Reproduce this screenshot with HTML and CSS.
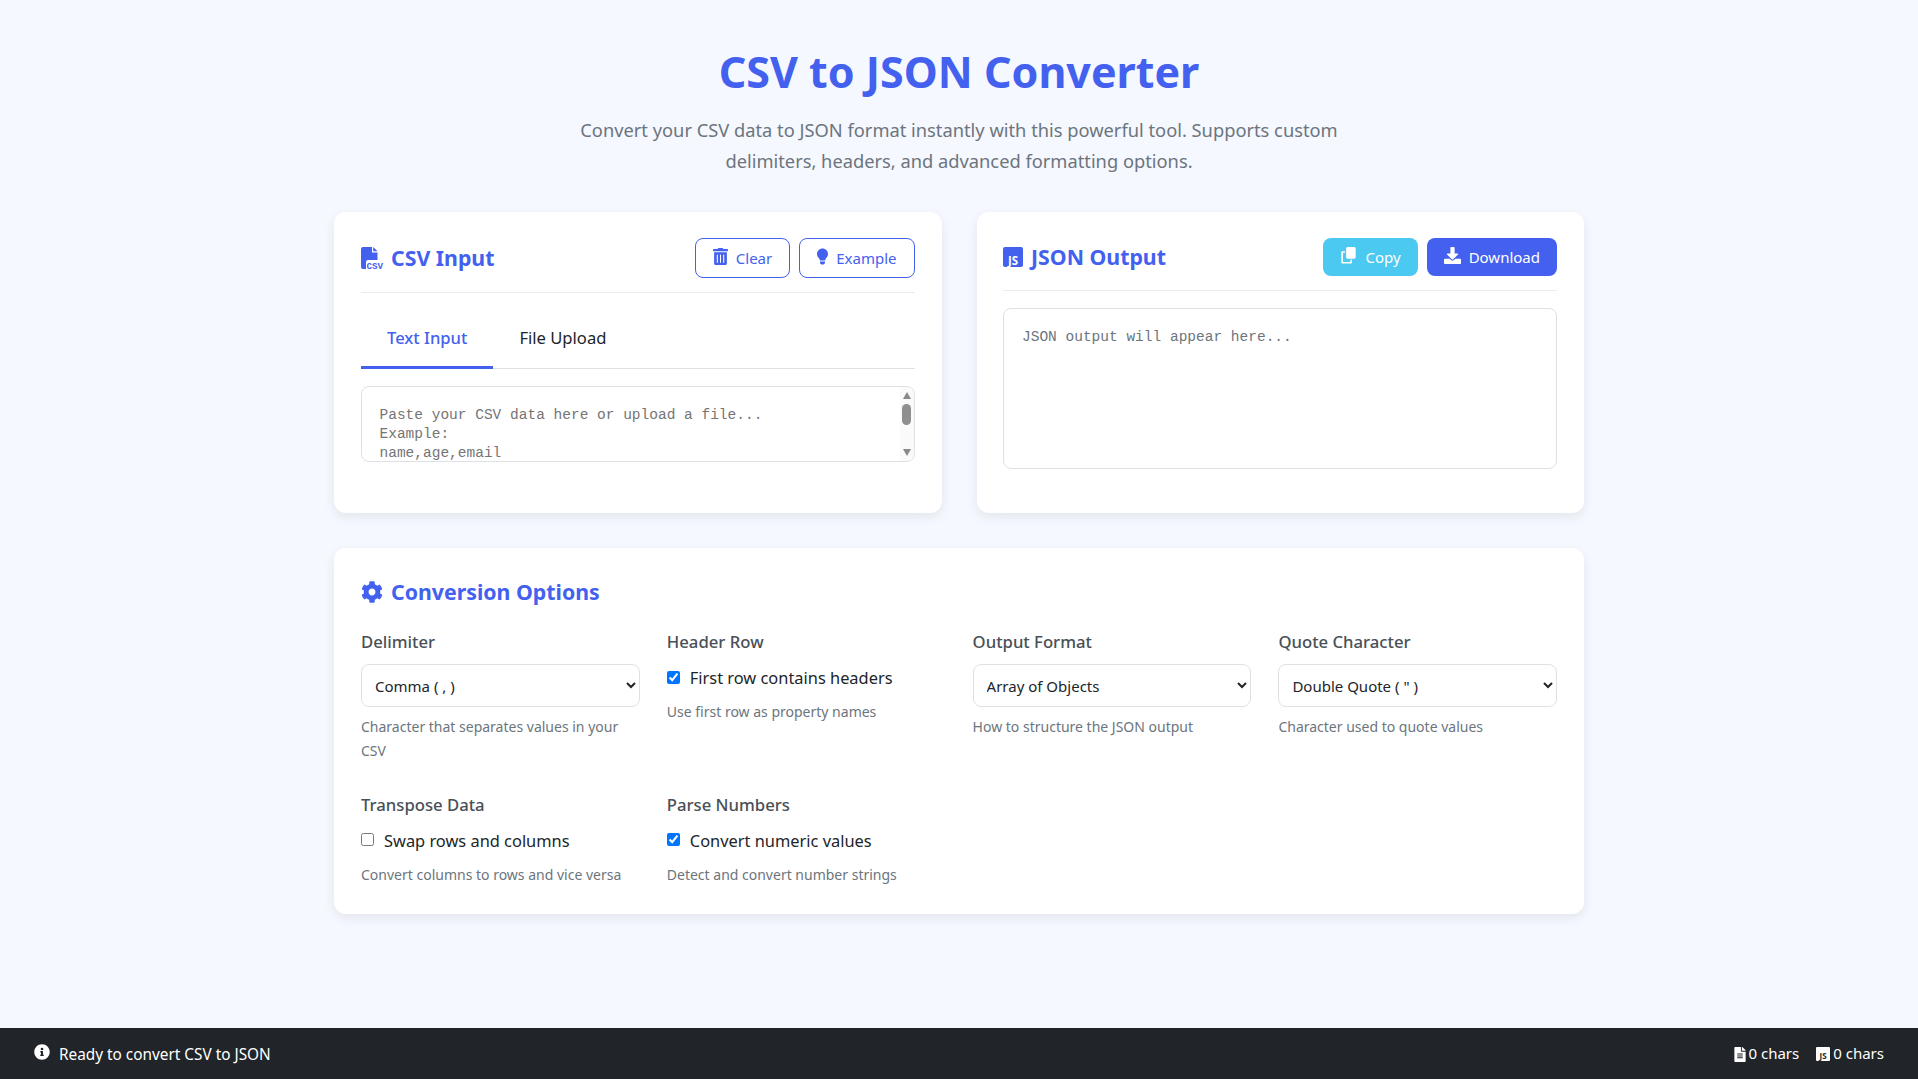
FILE: index.html
```html
<!DOCTYPE html>
<html lang="en">
<head>
<meta charset="utf-8">
<title>CSV to JSON Converter</title>
<link rel="stylesheet" href="styles.css">
</head>
<body>
<svg class="defs" width="0" height="0" aria-hidden="true">
  <defs>
    <symbol id="i-gear" viewBox="0 0 512 512"><path d="M487.4 315.7l-42.6-24.6c4.3-23.2 4.3-47 0-70.2l42.6-24.6c4.9-2.8 7.1-8.6 5.5-14-11.1-35.6-30-67.8-54.7-94.6-3.8-4.1-10-5.1-14.8-2.3L380.8 110c-17.9-15.4-38.5-27.3-60.8-35.1V25.8c0-5.6-3.9-10.5-9.4-11.7-36.7-8.2-74.3-7.8-109.2 0-5.5 1.2-9.4 6.1-9.4 11.7V75c-22.2 7.9-42.8 19.8-60.8 35.1L88.7 85.5c-4.9-2.8-11-1.9-14.8 2.3-24.7 26.7-43.6 58.9-54.7 94.6-1.7 5.4.6 11.2 5.5 14L67.3 221c-4.3 23.2-4.3 47 0 70.2l-42.6 24.6c-4.9 2.8-7.1 8.6-5.5 14 11.1 35.6 30 67.8 54.7 94.6 3.8 4.1 10 5.1 14.8 2.3l42.6-24.6c17.9 15.4 38.5 27.3 60.8 35.1v49.2c0 5.6 3.9 10.5 9.4 11.7 36.7 8.2 74.3 7.8 109.2 0 5.5-1.2 9.4-6.1 9.4-11.7v-49.2c22.2-7.9 42.8-19.8 60.8-35.1l42.6 24.6c4.9 2.8 11 1.9 14.8-2.3 24.7-26.7 43.6-58.9 54.7-94.6 1.5-5.5-.7-11.3-5.6-14.1zM256 336c-44.1 0-80-35.9-80-80s35.9-80 80-80 80 35.9 80 80-35.9 80-80 80z"/></symbol>
  </defs>
</svg>
<main class="page">
  <header class="hero">
    <h1 class="hero-title">CSV to JSON Converter</h1>
    <p class="hero-sub">Convert your CSV data to JSON format instantly with this powerful tool. Supports custom delimiters, headers, and advanced formatting options.</p>
  </header>

  <section class="panels">
    <article class="card">
      <div class="card-head">
        <h2 class="card-title">
          <svg class="icon-csv" viewBox="0 0 24 25"><path class="fill-cur" d="M2 0h9v5.500h5.500V13H7a2 2 0 0 0-2 2v7H2a2 2 0 0 1-2-2V2a2 2 0 0 1 2-2zM12.200 0l4.300 4.300H12.200z"/><text class="csv-mark" x="5.400" y="21.500">CSV</text></svg>
          CSV Input
        </h2>
        <div class="btn-row">
          <button class="btn btn-outline"><svg class="btn-icon" viewBox="0 0 448 512"><path fill="currentColor" d="M32 464a48 48 0 0 0 48 48h288a48 48 0 0 0 48-48V128H32zm272-256a16 16 0 0 1 32 0v224a16 16 0 0 1-32 0zm-96 0a16 16 0 0 1 32 0v224a16 16 0 0 1-32 0zm-96 0a16 16 0 0 1 32 0v224a16 16 0 0 1-32 0zM432 32H312l-9.400-18.700A24 24 0 0 0 281.100 0H166.800a23.700 23.700 0 0 0-21.400 13.300L136 32H16A16 16 0 0 0 0 48v32a16 16 0 0 0 16 16h416a16 16 0 0 0 16-16V48a16 16 0 0 0-16-16z"/></svg>Clear</button>
          <button class="btn btn-outline"><svg class="btn-icon btn-icon-bulb" viewBox="0 0 352 512"><path fill="currentColor" d="M96 454.300c0 6.300 1.900 12.500 5.400 17.700l17.100 25.700c5.200 7.900 16.900 14.300 26.400 14.300h61.700c9.500 0 21.200-6.400 26.400-14.300l17.100-25.700c3-4.500 5.400-12.100 5.400-17.700L256 416H96zM176 0C73.700 0 0 83 0 176c0 44.400 16.500 84.900 43.600 115.800 16.600 18.900 42.400 58.500 52.200 91.900l.2 .3h160l.2-.3c9.800-33.400 35.600-73 52.200-91.900C335.500 260.900 352 220.400 352 176 352 78.800 273.200 0 176 0z"/></svg>Example</button>
        </div>
      </div>
      <div class="tabs">
        <button class="tab tab-active">Text Input</button>
        <button class="tab">File Upload</button>
      </div>
      <div class="csv-wrap">
        <textarea class="csv-area" placeholder="Paste your CSV data here or upload a file...&#10;Example:&#10;name,age,email&#10;John,30,john@example.com&#10;Jane,25,jane@example.com&#10;Bob,41,bob@example.com"></textarea>
        <div class="scrollbar" aria-hidden="true">
          <span class="sb-up"></span>
          <span class="sb-thumb"></span>
          <span class="sb-down"></span>
        </div>
      </div>
    </article>

    <article class="card card-right">
      <div class="card-head card-head-tight">
        <h2 class="card-title">
          <svg class="icon-js" viewBox="0 0 20 20"><rect class="fill-cur" width="20" height="20" rx="2"/><text class="js-mark" x="5" y="17.500">JS</text></svg>
          JSON Output
        </h2>
        <div class="btn-row">
          <button class="btn btn-info"><svg class="btn-icon btn-icon-copy" viewBox="0 0 512 512"><path fill="currentColor" d="M208 0h192a48 48 0 0 1 48 48v256a48 48 0 0 1-48 48H208a48 48 0 0 1-48-48V48a48 48 0 0 1 48-48zM64 128h64v48H64v272h224v-64h48v80a32 32 0 0 1-32 32H48a32 32 0 0 1-32-32V160a32 32 0 0 1 32-32z" transform="translate(24 0)"/></svg>Copy</button>
          <button class="btn btn-primary"><svg class="btn-icon btn-icon-copy" viewBox="0 0 512 512"><path fill="currentColor" d="M216 0h80c13.300 0 24 10.700 24 24v168h87.700c17.800 0 26.700 21.500 14.100 34.100L269.700 378.300c-7.500 7.500-19.800 7.500-27.300 0L90.100 226.100c-12.600-12.600-3.700-34.100 14.100-34.100H192V24c0-13.300 10.700-24 24-24zm296 376v112c0 13.300-10.700 24-24 24H24c-13.300 0-24-10.700-24-24V376c0-13.300 10.700-24 24-24h146.700l49 49c20.100 20.100 52.500 20.100 72.600 0l49-49H488c13.300 0 24 10.700 24 24z"/></svg>Download</button>
        </div>
      </div>
      <div class="json-out">JSON output will appear here...</div>
    </article>
  </section>

  <section class="card options">
    <h2 class="card-title options-title"><svg class="icon-gear"><use href="#i-gear"/></svg>Conversion Options</h2>
    <div class="options-grid">
      <div class="opt">
        <label class="opt-label">Delimiter</label>
        <select class="opt-select"><option>Comma ( , )</option></select>
        <p class="opt-help">Character that separates values in your CSV</p>
      </div>
      <div class="opt">
        <span class="opt-label">Header Row</span>
        <label class="check"><input type="checkbox" checked>First row contains headers</label>
        <p class="opt-help">Use first row as property names</p>
      </div>
      <div class="opt">
        <label class="opt-label">Output Format</label>
        <select class="opt-select"><option>Array of Objects</option></select>
        <p class="opt-help">How to structure the JSON output</p>
      </div>
      <div class="opt">
        <label class="opt-label">Quote Character</label>
        <select class="opt-select"><option>Double Quote ( " )</option></select>
        <p class="opt-help">Character used to quote values</p>
      </div>
      <div class="opt">
        <span class="opt-label">Transpose Data</span>
        <label class="check"><input type="checkbox">Swap rows and columns</label>
        <p class="opt-help">Convert columns to rows and vice versa</p>
      </div>
      <div class="opt">
        <span class="opt-label">Parse Numbers</span>
        <label class="check"><input type="checkbox" checked>Convert numeric values</label>
        <p class="opt-help">Detect and convert number strings</p>
      </div>
    </div>
  </section>
</main>

<footer class="status">
  <div class="status-left">
    <svg class="status-icon" viewBox="0 0 512 512"><path fill="#fff" d="M256 8C119 8 8 119 8 256s111 248 248 248 248-111 248-248S393 8 256 8zm0 110a42 42 0 1 1 0 84 42 42 0 0 1 0-84zm56 254a12 12 0 0 1-12 12h-88a12 12 0 0 1-12-12v-24a12 12 0 0 1 12-12h12v-64h-12a12 12 0 0 1-12-12v-24a12 12 0 0 1 12-12h64a12 12 0 0 1 12 12v100h12a12 12 0 0 1 12 12z"/></svg>
    Ready to convert CSV to JSON
  </div>
  <div class="status-right">
    <span class="stat"><svg class="stat-file" viewBox="0 0 384 512"><path fill="#fff" d="M224 136V0H24C10.700 0 0 10.700 0 24v464c0 13.300 10.700 24 24 24h336c13.300 0 24-10.700 24-24V160H248c-13.200 0-24-10.800-24-24zm64 236c0 6.600-5.400 12-12 12H108c-6.600 0-12-5.400-12-12v-8c0-6.600 5.400-12 12-12h168c6.600 0 12 5.400 12 12v8zm0-64c0 6.600-5.400 12-12 12H108c-6.600 0-12-5.400-12-12v-8c0-6.600 5.400-12 12-12h168c6.600 0 12 5.400 12 12v8zm0-72v8c0 6.600-5.400 12-12 12H108c-6.600 0-12-5.400-12-12v-8c0-6.600 5.400-12 12-12h168c6.600 0 12 5.400 12 12zm96-114.100v6.100H256V0h6.100c6.400 0 12.500 2.500 17 7l97.900 98c4.500 4.500 7 10.600 7 16.900z"/></svg>0 chars</span>
    <span class="stat"><svg class="stat-js" viewBox="0 0 20 20"><rect fill="#fff" width="20" height="20" rx="1.500"/><text class="js-mark-dark" x="5" y="17.500">JS</text></svg>0 chars</span>
  </div>
</footer>
</body>
</html>
```

FILE: styles.css
```css
* { box-sizing: border-box; }
html, body { height: 100%; }
body {
  margin: 0;
  display: flex;
  flex-direction: column;
  background: #f5f8ff;
  color: #212529;
  font-family: "Noto Sans", "Open Sans", sans-serif;
  font-size: 16px;
  line-height: 1.7;
}
.defs { display: block; height: 0; }
.page { flex: 1; width: 1250px; margin: 0 auto; }

.hero { padding-top: 42px; text-align: center; }
.hero-title { margin: 0; color: #4361ee; font-size: 43px; line-height: 60px; font-weight: 700; }
.hero-sub { width: 800px; margin: 12px auto 0; color: #6c757d; font-size: 18.3px; line-height: 31px; }

.panels { display: grid; grid-template-columns: 1fr 1fr; gap: 35px; margin-top: 36px; }
.card {
  background: #fff;
  border-radius: 12px;
  padding: 26px 27px 44px;
  box-shadow: 0 4px 12px rgba(0, 0, 0, .08);
}
.card-right { padding-left: 26.5px; }
.card-head {
  display: flex;
  justify-content: space-between;
  align-items: center;
  padding-bottom: 14px;
  border-bottom: 1px solid #e9ecef;
}
.card-head-tight { margin-bottom: 17px; }
.card-title {
  display: flex;
  align-items: center;
  gap: 8px;
  margin: 0;
  color: #4361ee;
  font-size: 21.3px;
  line-height: 36px;
  font-weight: 700;
}
.fill-cur { fill: currentColor; }
.icon-csv { width: 24px; height: 25px; margin: 3px -2px 0 0; }
.icon-js { width: 20px; height: 20px; }
.csv-mark { fill: currentColor; font: 700 9.3px "Liberation Mono", monospace; }
.js-mark { fill: #fff; font: 700 11.5px "Noto Sans", sans-serif; }
.js-mark-dark { fill: #212529; font: 700 11.5px "Noto Sans", sans-serif; }

.btn-row { display: flex; gap: 9px; }
.btn {
  display: flex;
  align-items: center;
  gap: 8px;
  height: 38px;
  padding: 0 17px;
  border: 0;
  border-radius: 8px;
  font: inherit;
  font-size: 15px;
  line-height: 1;
}
.btn-icon { width: 15px; height: 17px; margin-top: -3px; }
.btn-icon-bulb { width: 11px; }
.btn-icon-copy { width: 17px; }
.btn-outline { height: 40px; background: #fff; color: #4361ee; border: 1.5px solid #4361ee; }
.btn-info { background: #4cc9f0; color: #fff; }
.btn-primary { background: #4361ee; color: #fff; }

.tabs { display: flex; margin-top: 17px; border-bottom: 1px solid #dee2e6; }
.tab {
  padding: 14px 26px;
  border: 0;
  border-bottom: 3px solid transparent;
  margin-bottom: -1px;
  background: none;
  color: #212529;
  font: inherit;
  font-size: 16.6px;
}
.tab-active { color: #4361ee; border-bottom-color: #4361ee; font-weight: 500; }

.csv-wrap { position: relative; margin-top: 17px; }
.csv-area {
  display: block;
  width: 100%;
  height: 76px;
  padding: 19px 30px 0 17.500px;
  border: 1px solid #dee2e6;
  border-radius: 8px;
  font: 14.5px/19px "Liberation Mono", monospace;
  resize: none;
  overflow: hidden;
  outline: 0;
}
.csv-area::placeholder { color: #757575; }
.scrollbar {
  position: absolute;
  top: 1px;
  right: 1px;
  bottom: 1px;
  width: 14px;
  display: flex;
  flex-direction: column;
  align-items: center;
  padding: 5px 0 5px;
  background: #fafafa;
  border-radius: 0 7px 7px 0;
}
.sb-up, .sb-down { width: 0; height: 0; border-left: 4.5px solid transparent; border-right: 4.5px solid transparent; }
.sb-up { border-bottom: 7px solid #8a8a8a; }
.sb-down { border-top: 7px solid #8a8a8a; margin-top: auto; }
.sb-thumb { width: 9px; height: 21px; margin-top: 5px; border-radius: 5px; background: #8f8f8f; }

.json-out {
  height: 161px;
  padding: 19px 18px;
  border: 1px solid #dee2e6;
  border-radius: 8px;
  color: #6c757d;
  font: 14.5px/19px "Liberation Mono", monospace;
}

.options { margin-top: 35px; padding: 26px 27px 27px; }
.icon-gear { width: 22px; height: 22px; fill: currentColor; }
.options-grid { display: grid; grid-template-columns: repeat(4, 1fr); gap: 27.5px 27.2px; margin-top: 18px; }
.opt-label { display: block; margin-bottom: 8px; color: #495057; font-size: 16.7px; font-weight: 500; line-height: 28px; }
.opt-select {
  display: block;
  width: 100%;
  height: 43px;
  padding: 0 9px;
  border: 1px solid #dee2e6;
  border-radius: 8px;
  background: #fff;
  color: #212529;
  font: inherit;
  font-size: 15px;
}
.check { display: flex; align-items: center; margin-top: 3.500px; color: #212529; font-size: 16.4px; line-height: 28px; }
.check input { width: 13px; height: 13px; margin: 0 10px 2px 0; accent-color: #0075ff; }
.opt-help { margin: 8px 0 0; color: #6c757d; font-size: 14px; line-height: 24px; }

.status {
  display: flex;
  justify-content: space-between;
  align-items: center;
  height: 51px;
  padding: 1px 34px 0;
  background: #212529;
  color: #fff;
  font-size: 15px;
}
.status-left { display: flex; align-items: center; gap: 9px; font-size: 15.35px; }
.status-icon { width: 16px; height: 16px; margin-top: -3px; }
.status-right { display: flex; gap: 17px; }
.stat { display: flex; align-items: center; gap: 3px; }
.stat-file { width: 12px; height: 15px; }
.stat-js { width: 14px; height: 14px; }
```
